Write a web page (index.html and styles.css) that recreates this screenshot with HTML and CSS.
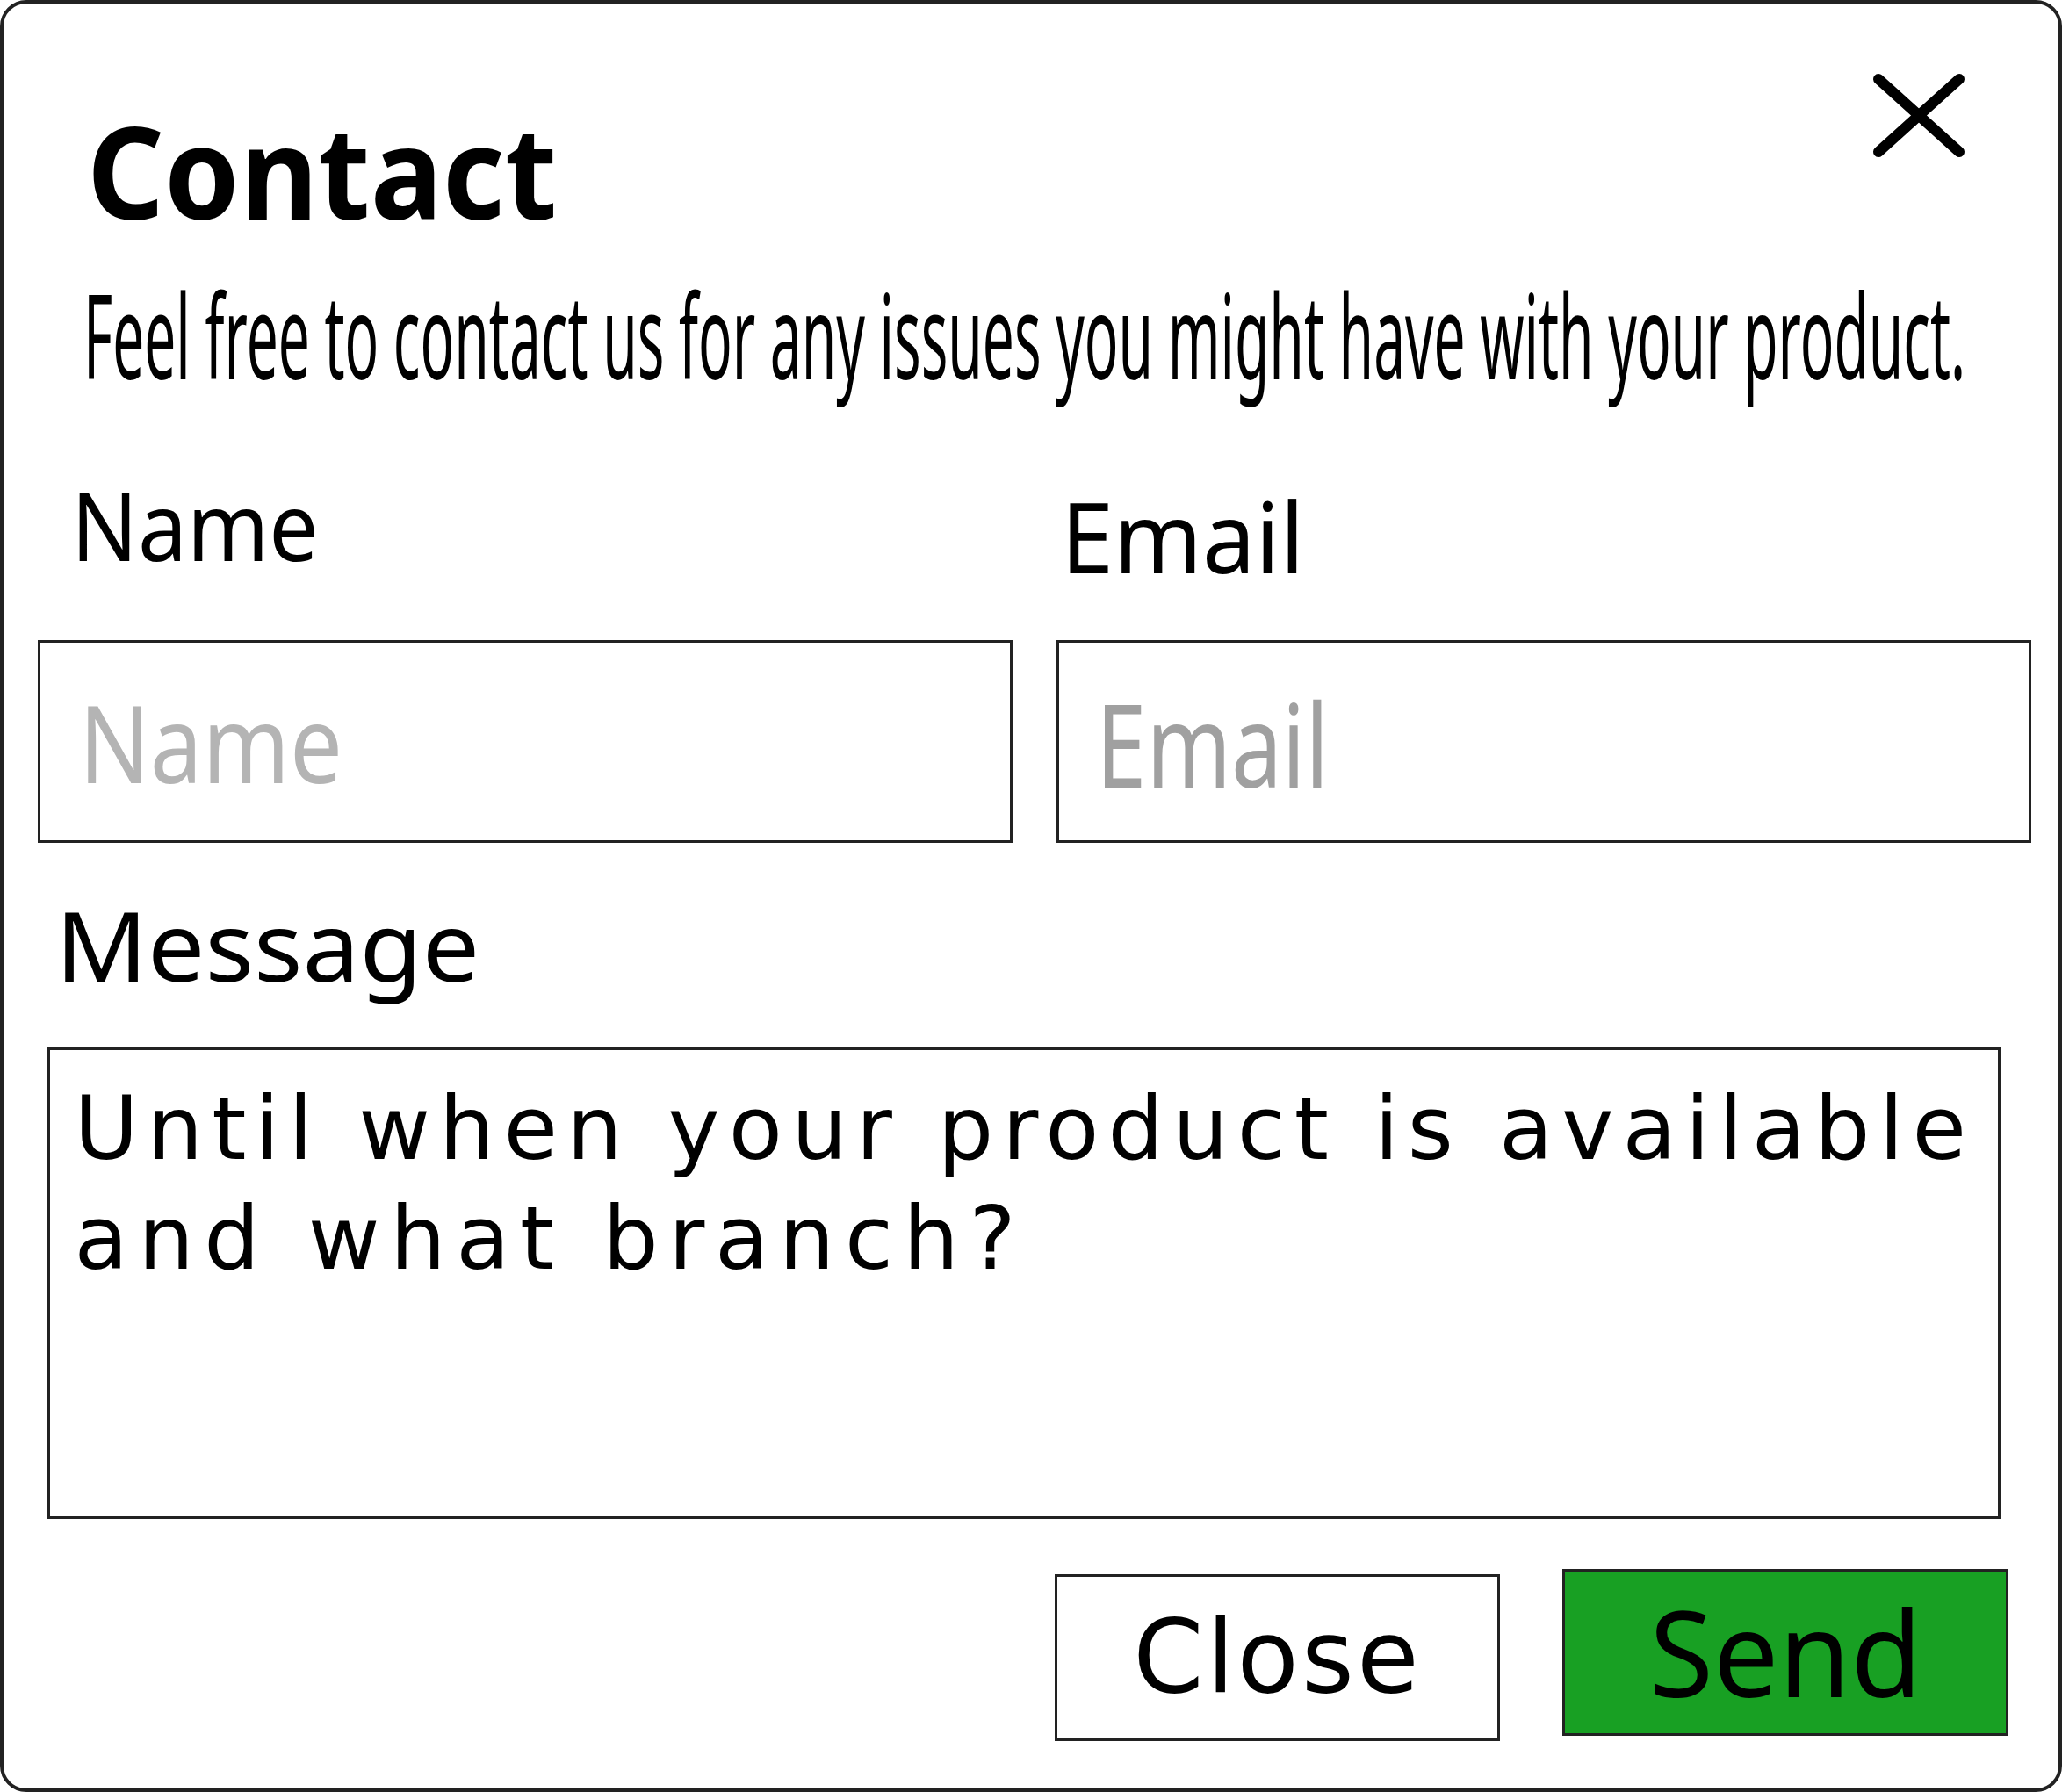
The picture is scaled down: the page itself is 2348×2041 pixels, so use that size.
FILE: index.html
```html
<!DOCTYPE html>
<html lang="en">
<head>
<meta charset="utf-8">
<title>Contact</title>
<link rel="stylesheet" href="styles.css">
</head>
<body>
<div class="dialog">
  <header class="head">
    <h1 class="title">Contact</h1>
    <svg class="close-x" width="114" height="105" viewBox="0 0 114 105" aria-label="Close">
      <line x1="11" y1="11" x2="103" y2="94"/>
      <line x1="103" y1="11" x2="11" y2="94"/>
    </svg>
  </header>
  <p class="lead">Feel free to contact us for any issues you might have with your product.</p>
  <div class="fields">
    <div class="field">
      <label class="label label-name">Name</label>
      <div class="box box-name"><span class="ph ph-name">Name</span></div>
    </div>
    <div class="field">
      <label class="label label-email">Email</label>
      <div class="box box-email"><span class="ph ph-email">Email</span></div>
    </div>
  </div>
  <label class="label label-msg">Message</label>
  <div class="textarea">
    <p class="msg"><span class="msg-line msg-line-1">Until when your product is available</span><span class="msg-line msg-line-2">and what branch?</span></p>
  </div>
  <div class="actions">
    <button class="btn btn-close"><span class="btn-text close-text">Close</span></button>
    <button class="btn btn-send"><span class="btn-text send-text">Send</span></button>
  </div>
</div>
</body>
</html>
```

FILE: styles.css
```css
html, body {
  margin: 0;
  padding: 0;
  overflow: hidden;
  background: #ffffff;
}

.dialog {
  box-sizing: border-box;
  width: 2348px;
  height: 2041px;
  border: 4px solid #222222;
  border-radius: 30px;
  overflow: hidden;
  color: #000000;
  font-family: "Noto Sans", "Open Sans", sans-serif;
}

.head {
  display: flex;
  align-items: flex-start;
}

.title {
  margin: 116.6px 0 0 95px;
  font-family: "Noto Sans", "Open Sans", sans-serif;
  font-weight: 700;
  font-size: 146px;
  line-height: 1;
  width: max-content;
  transform: scaleX(0.94);
  transform-origin: left center;
}

.close-x {
  display: block;
  margin: 75px 102px 0 auto;
  stroke: #000000;
  stroke-width: 12;
  stroke-linecap: round;
}

.lead {
  margin: 47.3px 0 0 90.7px;
  font-size: 133px;
  line-height: 1;
  white-space: nowrap;
  width: max-content;
  transform: scaleX(0.481);
  transform-origin: left center;
}

.fields {
  display: grid;
  grid-template-columns: 1110px 1110px;
  column-gap: 50px;
  margin-left: 39px;
}

.field {
  display: flex;
  flex-direction: column;
  align-items: flex-start;
}

.label {
  display: block;
  width: max-content;
  line-height: 1;
  white-space: nowrap;
  transform-origin: left center;
}

.label-name {
  font-size: 108px;
  margin: 97.3px 0 0 38px;
  transform: scaleX(0.925);
}

.label-email {
  font-size: 112px;
  margin: 107.6px 0 0 5px;
  transform: scaleX(0.964);
}

.box {
  box-sizing: border-box;
  align-self: stretch;
  height: 231px;
  border: 3px solid #222222;
  background: #ffffff;
}

.box-name {
  margin-top: 76.8px;
}

.box-email {
  margin-top: 62.5px;
}

.ph {
  display: block;
  width: max-content;
  line-height: 1;
  white-space: nowrap;
  transform-origin: left center;
}

.ph-name {
  font-size: 122px;
  color: #b4b4b4;
  margin: 51.8px 0 0 44px;
  transform: scaleX(0.872);
}

.ph-email {
  font-size: 132px;
  color: #a0a0a0;
  margin: 48px 0 0 42px;
  transform: scaleX(0.782);
}

.label-msg {
  font-size: 109px;
  margin: 61px 0 0 59px;
  transform: scaleX(1.063);
}

.textarea {
  box-sizing: border-box;
  width: 2224px;
  height: 537px;
  margin: 63px 0 0 50px;
  border: 3px solid #222222;
  padding: 26.8px 0 0 27.5px;
}

.msg {
  margin: 0;
  font-family: "DejaVu Sans", "Verdana", sans-serif;
  font-size: 100px;
  line-height: 125px;
  white-space: nowrap;
}

.msg-line {
  display: block;
}

.msg-line-1 {
  letter-spacing: 10.1px;
}

.msg-line-2 {
  letter-spacing: 11.6px;
}

.actions {
  display: flex;
  align-items: flex-start;
  margin-left: 1197px;
}

.btn {
  box-sizing: border-box;
  display: flex;
  align-items: center;
  justify-content: center;
  width: 508px;
  height: 190px;
  padding: 0;
  border: 3px solid #222222;
  background: #ffffff;
  color: #000000;
  cursor: pointer;
}

.btn-close {
  margin-top: 63px;
  width: 507px;
}

.btn-send {
  margin: 57px 0 0 71px;
  background: #18a023;
}

.btn-text {
  display: block;
  line-height: 1;
  white-space: nowrap;
}

.close-text {
  font-family: "DejaVu Sans", "Verdana", sans-serif;
  font-size: 115px;
  letter-spacing: 3px;
  margin-left: 0;
}

.send-text {
  font-family: "Noto Sans", "Open Sans", sans-serif;
  font-size: 135px;
  transform: scaleX(0.98);
}
```
